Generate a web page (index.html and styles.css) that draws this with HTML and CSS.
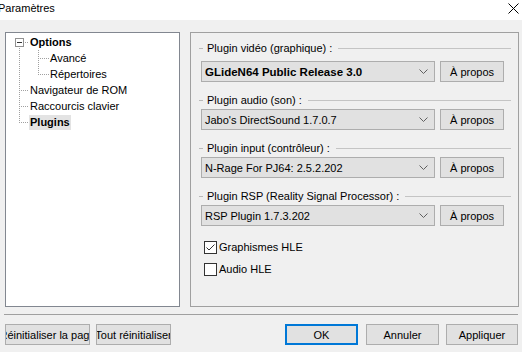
FILE: index.html
```html
<!DOCTYPE html>
<html lang="fr">
<head>
<meta charset="utf-8">
<title>Paramètres</title>
<link rel="stylesheet" href="styles.css">
</head>
<body>
<div class="titlebar">
  <span class="title">Paramètres</span>
  <svg class="close" width="11" height="11" viewBox="0 0 11 11"><path d="M0.5 0.5 L10.5 10.5 M10.5 0.5 L0.5 10.5" stroke="#000" stroke-width="1" fill="none"/></svg>
</div>
<div class="main">
  <div class="tree">
    <div class="row">
      <svg class="conn" width="23" height="16" viewBox="0 0 23 16" shape-rendering="crispEdges">
        <rect x="9.5" y="4.5" width="8" height="8" fill="#fff" stroke="#919191"/>
        <line x1="11" y1="8.5" x2="16" y2="8.5" stroke="#333"/>
        <line x1="19" y1="8.5" x2="23" y2="8.5" stroke="#a0a0a0" stroke-dasharray="1 1"/>
        <line x1="13.5" y1="14" x2="13.5" y2="16" stroke="#a0a0a0" stroke-dasharray="1 1"/>
      </svg>
      <span class="label bold">Options</span>
    </div>
    <div class="row">
      <svg class="conn" width="43" height="16" viewBox="0 0 43 16" shape-rendering="crispEdges">
        <line x1="13.5" y1="0" x2="13.5" y2="16" stroke="#a0a0a0" stroke-dasharray="1 1"/>
        <line x1="32.5" y1="0" x2="32.5" y2="16" stroke="#a0a0a0" stroke-dasharray="1 1"/>
        <line x1="34" y1="8.5" x2="43" y2="8.5" stroke="#a0a0a0" stroke-dasharray="1 1"/>
      </svg>
      <span class="label">Avancé</span>
    </div>
    <div class="row">
      <svg class="conn" width="43" height="16" viewBox="0 0 43 16" shape-rendering="crispEdges">
        <line x1="13.5" y1="0" x2="13.5" y2="16" stroke="#a0a0a0" stroke-dasharray="1 1"/>
        <line x1="32.5" y1="0" x2="32.5" y2="9" stroke="#a0a0a0" stroke-dasharray="1 1"/>
        <line x1="34" y1="8.5" x2="43" y2="8.5" stroke="#a0a0a0" stroke-dasharray="1 1"/>
      </svg>
      <span class="label">Répertoires</span>
    </div>
    <div class="row">
      <svg class="conn" width="23" height="16" viewBox="0 0 23 16" shape-rendering="crispEdges">
        <line x1="13.5" y1="0" x2="13.5" y2="16" stroke="#a0a0a0" stroke-dasharray="1 1"/>
        <line x1="15" y1="8.5" x2="23" y2="8.5" stroke="#a0a0a0" stroke-dasharray="1 1"/>
      </svg>
      <span class="label">Navigateur de ROM</span>
    </div>
    <div class="row">
      <svg class="conn" width="23" height="16" viewBox="0 0 23 16" shape-rendering="crispEdges">
        <line x1="13.5" y1="0" x2="13.5" y2="16" stroke="#a0a0a0" stroke-dasharray="1 1"/>
        <line x1="15" y1="8.5" x2="23" y2="8.5" stroke="#a0a0a0" stroke-dasharray="1 1"/>
      </svg>
      <span class="label">Raccourcis clavier</span>
    </div>
    <div class="row">
      <svg class="conn" width="23" height="16" viewBox="0 0 23 16" shape-rendering="crispEdges">
        <line x1="13.5" y1="0" x2="13.5" y2="9" stroke="#a0a0a0" stroke-dasharray="1 1"/>
        <line x1="15" y1="8.5" x2="23" y2="8.5" stroke="#a0a0a0" stroke-dasharray="1 1"/>
      </svg>
      <span class="label bold selected">Plugins</span>
    </div>
  </div>

  <div class="panel">
    <div class="group first">
      <div class="legend"><span class="dash"></span><span>Plugin vidéo (graphique) :</span><span class="rule"></span></div>
      <div class="field">
        <div class="combo"><span class="combo-text strong">GLideN64 Public Release 3.0</span><svg class="chev" width="9" height="5" viewBox="0 0 9 5"><polyline points="0.5,0.5 4.5,4.5 8.5,0.5" fill="none" stroke="#606060"/></svg></div>
        <div class="btn about">À propos</div>
      </div>
    </div>
    <div class="group">
      <div class="legend"><span class="dash"></span><span>Plugin audio (son) :</span><span class="rule"></span></div>
      <div class="field">
        <div class="combo"><span class="combo-text">Jabo's DirectSound 1.7.0.7</span><svg class="chev" width="9" height="5" viewBox="0 0 9 5"><polyline points="0.5,0.5 4.5,4.5 8.5,0.5" fill="none" stroke="#606060"/></svg></div>
        <div class="btn about">À propos</div>
      </div>
    </div>
    <div class="group">
      <div class="legend"><span class="dash"></span><span>Plugin input (contrôleur) :</span><span class="rule"></span></div>
      <div class="field">
        <div class="combo"><span class="combo-text">N-Rage For PJ64: 2.5.2.202</span><svg class="chev" width="9" height="5" viewBox="0 0 9 5"><polyline points="0.5,0.5 4.5,4.5 8.5,0.5" fill="none" stroke="#606060"/></svg></div>
        <div class="btn about">À propos</div>
      </div>
    </div>
    <div class="group">
      <div class="legend"><span class="dash"></span><span>Plugin RSP (Reality Signal Processor) :</span><span class="rule"></span></div>
      <div class="field">
        <div class="combo"><span class="combo-text">RSP Plugin 1.7.3.202</span><svg class="chev" width="9" height="5" viewBox="0 0 9 5"><polyline points="0.5,0.5 4.5,4.5 8.5,0.5" fill="none" stroke="#606060"/></svg></div>
        <div class="btn about">À propos</div>
      </div>
    </div>
    <div class="checks">
      <div class="check">
        <span class="box"><svg width="11" height="11" viewBox="0 0 11 11"><polyline points="1.5,5.5 4,8 9.5,2.5" fill="none" stroke="#333" stroke-width="1"/></svg></span>
        <span>Graphismes HLE</span>
      </div>
      <div class="check">
        <span class="box"></span>
        <span>Audio HLE</span>
      </div>
    </div>
  </div>
</div>
<div class="sep"></div>
<div class="footer">
  <div class="btn reset-page"><span>Réinitialiser la page</span></div>
  <div class="btn reset-all"><span>Tout réinitialiser</span></div>
  <div class="spacer"></div>
  <div class="btn ok">OK</div>
  <div class="btn cancel">Annuler</div>
  <div class="btn apply">Appliquer</div>
</div>
</body>
</html>
```

FILE: styles.css
```css
html, body {
  margin: 0;
  padding: 0;
}
body {
  width: 522px;
  height: 352px;
  overflow: hidden;
  background: #f0f0f0;
  font-family: "Liberation Sans", Arial, sans-serif;
  font-size: 11px;
  color: #000;
}
.titlebar {
  height: 20px;
  background: #fff;
  display: flex;
  justify-content: space-between;
  align-items: flex-start;
}
.title {
  margin-left: -2px;
  line-height: 17px;
}
.close {
  margin-top: 3px;
  margin-right: 3px;
}
.main {
  display: flex;
  gap: 10px;
  padding: 12px 0 0 5px;
}
.tree {
  width: 175px;
  height: 275px;
  box-sizing: border-box;
  border: 1px solid #828790;
  background: #fff;
  padding-top: 1px;
}
.row {
  display: flex;
  height: 16px;
  align-items: center;
}
.conn {
  display: block;
  flex: none;
}
.label {
  padding: 0 1px;
  line-height: 15px;
  height: 15px;
  white-space: nowrap;
}
.bold {
  font-weight: bold;
}
.selected {
  background: #e3e3e3;
}
.panel {
  width: 329px;
  height: 275px;
  box-sizing: border-box;
  border: 1px solid #a0a0a0;
  padding: 8px 7px 0 8px;
}
.group + .group {
  margin-top: 11px;
}
.legend {
  display: flex;
  align-items: center;
  height: 14px;
  white-space: nowrap;
}
.dash {
  width: 4px;
  height: 1px;
  background: #b9b9b9;
  margin-right: 4px;
}
.rule {
  flex: 1;
  height: 1px;
  background: #c4c4c4;
  margin-left: 6px;
}
.field {
  display: flex;
  gap: 5px;
  margin: 2px 0 0 2px;
}
.first .field {
  margin-top: 6px;
}
.combo {
  width: 234px;
  height: 21px;
  box-sizing: border-box;
  border: 1px solid #adadad;
  background: #e1e1e1;
  display: flex;
  align-items: center;
  justify-content: space-between;
  padding: 0 6px 0 3px;
}
.combo-text {
  white-space: nowrap;
}
.strong {
  font-weight: bold;
  font-size: 11.5px;
}
.chev {
  display: block;
}
.btn {
  height: 21px;
  box-sizing: border-box;
  border: 1px solid #adadad;
  background: #e1e1e1;
  display: flex;
  align-items: center;
  justify-content: center;
  white-space: nowrap;
  overflow: hidden;
}
.about {
  width: 64px;
}
.checks {
  margin-top: 13px;
  margin-left: 5px;
}
.check {
  display: flex;
  align-items: center;
  height: 16px;
}
.check + .check {
  margin-top: 6px;
}
.box {
  width: 13px;
  height: 13px;
  box-sizing: border-box;
  border: 1px solid #333;
  background: #fff;
  margin-right: 2px;
  display: flex;
  align-items: center;
  justify-content: center;
}
.box svg {
  display: block;
}
.sep {
  height: 1px;
  background: #a0a0a0;
  margin: 7px 4px 0 4px;
}
.footer {
  display: flex;
  padding: 9px 4px 0 5px;
}
.reset-page {
  width: 85px;
  flex: none;
}
.reset-all {
  width: 75px;
  flex: none;
  margin-left: 6px;
}
.spacer {
  flex: 1;
}
.ok {
  width: 73px;
  border: 2px solid #0078d7;
  margin-right: 8px;
}
.cancel {
  width: 73px;
  margin-right: 7px;
}
.apply {
  width: 72px;
}
```
